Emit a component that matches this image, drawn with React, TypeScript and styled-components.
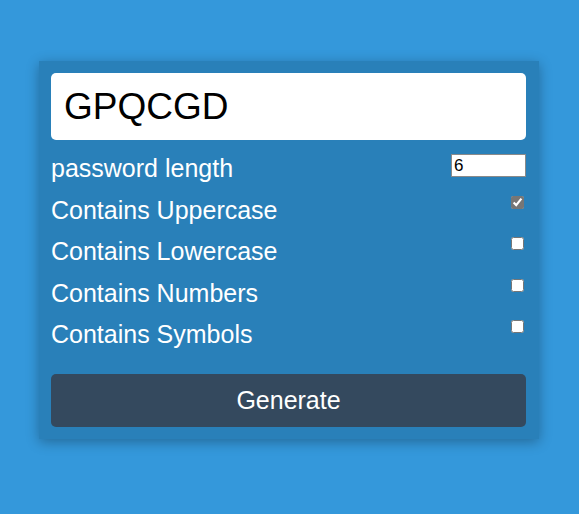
import React, { useState } from "react";
import styled, { createGlobalStyle } from "styled-components";

const Global = createGlobalStyle`
  html, body { margin: 0; padding: 0; }
  body {
    background: #3498db;
    font-family: "Liberation Sans", Arial, sans-serif;
    color: #fff;
  }
`;

const Page = styled.div`
  width: 579px;
  height: 514px;
  display: flex;
  justify-content: flex-start;
  align-items: flex-start;
  padding: 61px 0 0 39px;
  box-sizing: border-box;
`;

const Card = styled.div`
  width: 500px;
  height: 378px;
  box-sizing: border-box;
  background: #2980b9;
  box-shadow: 0 3px 12px rgba(0, 0, 0, 0.3);
  padding: 12px 13px 12px 12px;
  display: flex;
  flex-direction: column;
`;

const Result = styled.div`
  height: 67px;
  background: #fff;
  border-radius: 5px;
  color: #000;
  font-size: 37px;
  display: flex;
  align-items: center;
  padding-left: 13px;
  margin-bottom: 7px;
`;

const Row = styled.div`
  height: 41.5px;
  display: flex;
  justify-content: space-between;
  align-items: flex-start;
  font-size: 25px;
`;

const Label = styled.label`
  line-height: 42px;
`;

const NumberInput = styled.input`
  width: 75px;
  height: 23px;
  box-sizing: border-box;
  margin: 7px 0 0 0;
  border: 1px solid #8a8a8a;
  padding: 0 2px;
  font-family: "Liberation Sans", Arial, sans-serif;
  font-size: 17px;
  color: #000;
  background: #fff;
  -moz-appearance: textfield;
  &::-webkit-inner-spin-button,
  &::-webkit-outer-spin-button {
    -webkit-appearance: none;
    margin: 0;
  }
`;

const Check = styled.input`
  width: 13px;
  height: 13px;
  margin: 7px 2px 0 0;
  accent-color: #767676;
`;

const GenerateButton = styled.button`
  margin-top: 19px;
  height: 53px;
  border: none;
  border-radius: 5px;
  background: #34495e;
  color: #fff;
  font-family: "Liberation Sans", Arial, sans-serif;
  font-size: 25px;
  cursor: pointer;
`;

export default function App() {
  const [opts, setOpts] = useState({
    upper: true,
    lower: false,
    numbers: false,
    symbols: false,
  });
  const toggle = (k: keyof typeof opts) =>
    setOpts((o) => ({ ...o, [k]: !o[k] }));

  const rows: { key: keyof typeof opts; label: string }[] = [
    { key: "upper", label: "Contains Uppercase" },
    { key: "lower", label: "Contains Lowercase" },
    { key: "numbers", label: "Contains Numbers" },
    { key: "symbols", label: "Contains Symbols" },
  ];

  return (
    <>
      <Global />
      <Page>
        <Card>
          <Result>GPQCGD</Result>
          <Row>
            <Label>password length</Label>
            <NumberInput type="number" defaultValue={6} />
          </Row>
          {rows.map((r) => (
            <Row key={r.key}>
              <Label>{r.label}</Label>
              <Check
                type="checkbox"
                checked={opts[r.key]}
                onChange={() => toggle(r.key)}
              />
            </Row>
          ))}
          <GenerateButton>Generate</GenerateButton>
        </Card>
      </Page>
    </>
  );
}
